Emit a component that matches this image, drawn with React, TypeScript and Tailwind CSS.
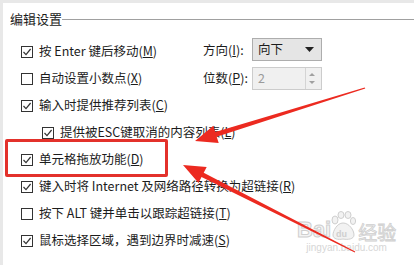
import React from 'react';

const Box = ({ checked }: { checked: boolean }) => (
  <svg width="12" height="12" viewBox="0 0 12 12" className="shrink-0">
    <rect x="0.5" y="0.5" width="11" height="11" fill="#fff" stroke="#333" />
    {checked && <polyline points="2.5,6 5,8.6 9.6,3" fill="none" stroke="#333" strokeWidth="1.2" />}
  </svg>
);

interface RowProps {
  checked: boolean;
  text: string;
  k: string;
  indent?: boolean;
  children?: React.ReactNode;
}

const Row = ({ checked, text, k, indent, children }: RowProps) => (
  <div className={`flex h-[27px] items-center ${indent ? 'pl-[39px]' : 'pl-[18px]'}`}>
    <div className={`flex items-center gap-[6px] ${children ? 'w-[182px]' : ''}`}>
      <Box checked={checked} />
      <span className="whitespace-nowrap">
        {text}(<u>{k}</u>)
      </span>
    </div>
    {children}
  </div>
);

const App = () => {
  return (
    <div
      className="relative h-[265px] w-[414px] overflow-hidden border-l-[3px] border-t-[3px] border-[#e8e8e8] bg-white text-[12.5px] text-[#1c1c1c]"
      style={{ fontFamily: '"Noto Sans CJK SC", "Noto Sans", sans-serif' }}
    >
      <div className="flex h-[32px] items-center pl-[7px]">
        <span className="text-[13px]">编辑设置</span>
        <div className="h-px flex-1 bg-[#a0a0a0]" />
      </div>

      <div className="pt-[3px]">
        <Row checked text="按 Enter 键后移动" k="M">
          <div className="flex items-center self-start pt-0">
            <span className="w-[49px] whitespace-nowrap leading-[23px]">
              方向(<u>I</u>):
            </span>
            <div className="flex h-[23px] w-[70px] items-center justify-between border border-[#adadad] bg-[#e5e5e5] pl-[5px] pr-[7px]">
              <span>向下</span>
              <svg width="9" height="5" viewBox="0 0 9 5">
                <polygon points="0,0 9,0 4.5,5" fill="#222" />
              </svg>
            </div>
          </div>
        </Row>
        <Row checked={false} text="自动设置小数点" k="X">
          <div className="flex items-center">
            <span className="w-[49px] whitespace-nowrap">
              位数(<u>P</u>):
            </span>
            <div className="flex h-[23px] w-[70px] items-center justify-between border border-[#cccccc] bg-[#f0f0f0] pl-[5px] pr-[3px]">
              <span className="text-[#9a9a9a]">2</span>
              <div className="flex h-full flex-col justify-center gap-[5px] border-l border-[#d4d4d4] px-[3px]">
                <svg width="6" height="3" viewBox="0 0 6 3">
                  <polygon points="0,3 6,3 3,0" fill="#a0a0a0" />
                </svg>
                <svg width="6" height="3" viewBox="0 0 6 3">
                  <polygon points="0,0 6,0 3,3" fill="#a0a0a0" />
                </svg>
              </div>
            </div>
          </div>
        </Row>
        <Row checked text="输入时提供推荐列表" k="C" />
        <Row checked indent text="提供被ESC键取消的内容列表" k="L" />
        <Row checked text="单元格拖放功能" k="D" />
        <Row checked text="键入时将 Internet 及网络路径转换为超链接" k="R" />
        <Row checked={false} text="按下 ALT 键并单击以跟踪超链接" k="T" />
        <Row checked text="鼠标选择区域，遇到边界时减速" k="S" />
      </div>

      {/* watermark */}
      <div className="absolute left-[294px] top-[208px] flex flex-col items-center text-[#dcdcdc]">
        <div className="flex items-end">
          <span className="text-[22px] font-bold leading-none" style={{ fontFamily: '"Liberation Sans", sans-serif', WebkitTextStroke: '1px #cfcfcf', color: '#f4f4f4' }}>
            Bai
          </span>
          <svg width="26" height="30" viewBox="0 0 26 30" className="-ml-[1px]">
            <g fill="#f2f2f2" stroke="#cfcfcf" strokeWidth="1">
              <ellipse cx="5" cy="9" rx="3" ry="4" />
              <ellipse cx="11" cy="4" rx="3" ry="3.5" />
              <ellipse cx="18" cy="4" rx="3" ry="3.5" />
              <ellipse cx="23" cy="10" rx="2.6" ry="3.5" />
              <path d="M13 12 C7 12 3 20 3 24 C3 28 8 29 13 28 C18 29 24 28 24 24 C24 19 19 12 13 12 Z" />
            </g>
            <text x="6" y="26" fontSize="9" fill="#cfcfcf" fontFamily="Liberation Sans" fontWeight="bold">du</text>
          </svg>
          <span className="ml-[2px] text-[19px] leading-none" style={{ color: '#f4f4f4', WebkitTextStroke: '0.8px #cfcfcf' }}>
            经验
          </span>
        </div>
        <span className="mt-[2px] text-[10px] leading-none text-[#d6d6d6]" style={{ fontFamily: '"Liberation Sans", sans-serif' }}>
          jingyan.baidu.com
        </span>
      </div>

      {/* red annotations */}
      <div className="absolute left-[2px] top-[136px] h-[38px] w-[163px] rounded-[2px] border-[3px] border-[#e3312b]" />
      <svg className="pointer-events-none absolute -left-[3px] -top-[3px]" width="414" height="265" viewBox="0 0 414 265">
        <polygon
          points="195,141 218.7,143 216.7,136.8 365.3,88.5 364.7,87.5 215.3,132 213.3,125.8"
          fill="#ec2a20"
        />
        <polygon
          points="183,165 198.5,183 201.5,177.1 354.8,252.4 355.2,251.6 203.7,172.7 206.7,166.9"
          fill="#ec2a20"
        />
      </svg>
    </div>
  );
};

export default App;
